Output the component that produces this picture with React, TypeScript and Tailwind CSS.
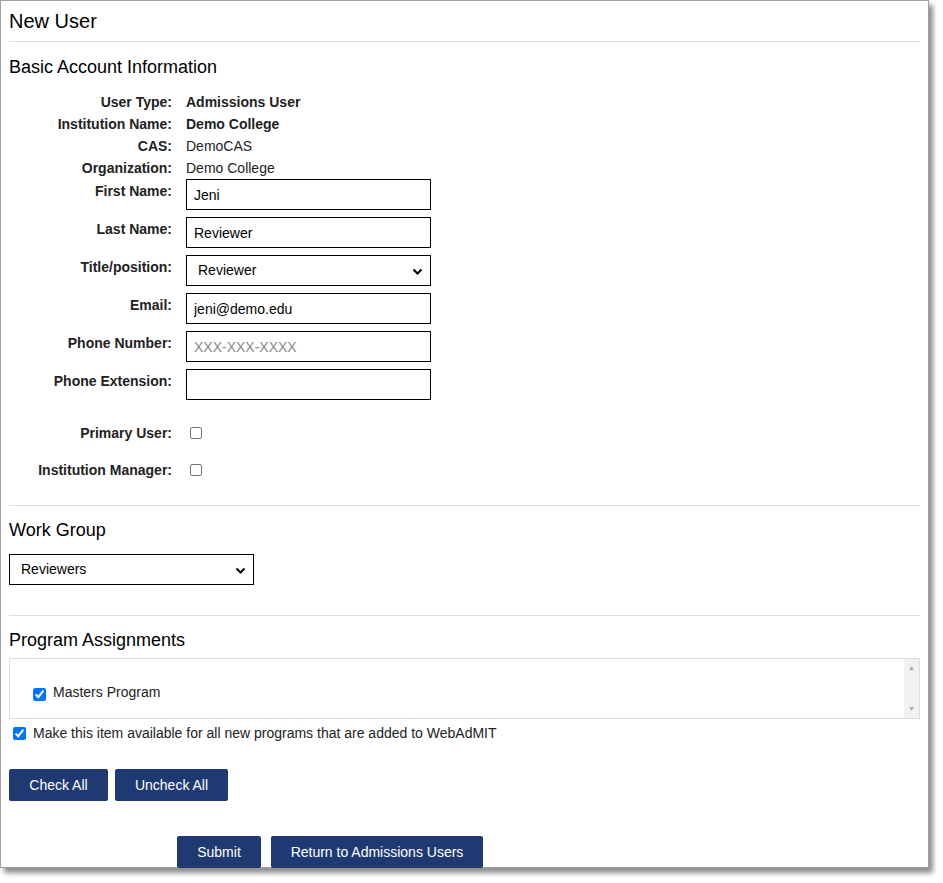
import React from "react";

const Label = ({ children, className = "" }: { children: React.ReactNode; className?: string }) => (
  <div className={`w-[163px] text-right font-bold pr-0 ${className}`}>{children}</div>
);

const Input = ({ value, placeholder }: { value?: string; placeholder?: string }) => (
  <input
    defaultValue={value}
    placeholder={placeholder}
    className="w-[245px] h-[31px] border border-black px-[7px] text-[14px] text-black placeholder:text-[#8a8a8a] outline-none"
  />
);

const Chevron = () => (
  <svg width="11" height="8" viewBox="0 0 11 8" className="absolute right-[7px] top-[12px]">
    <path d="M1.5 1.5 L5.5 5.5 L9.5 1.5" fill="none" stroke="#000" strokeWidth="2" />
  </svg>
);

const Btn = ({ children, w }: { children: React.ReactNode; w: string }) => (
  <button className={`${w} h-[32px] bg-[#1f3a73] text-white text-[14px] rounded-[2px]`}>{children}</button>
);

export default function App() {
  return (
    <div className="bg-white w-[943px] h-[883px]" style={{ fontFamily: '"Liberation Sans", Arial, sans-serif' }}>
      <div className="w-[929px] h-[868px] border border-[#a0a0a0] shadow-[4px_5px_5px_rgba(0,0,0,0.45)] px-[8px] text-[14px] text-[#222]">
        <div className="text-[20px] text-black pt-[8px] leading-[24px]">New User</div>
        <div className="h-px bg-[#ddd] mt-[8px]" />
        <div className="text-[18px] text-black mt-[15px] leading-[20px]">Basic Account Information</div>
        <div className="mt-[14px] flex flex-col">
          {[
            ["User Type:", "Admissions User", true],
            ["Institution Name:", "Demo College", true],
            ["CAS:", "DemoCAS", false],
            ["Organization:", "Demo College", false],
          ].map(([l, v, b], i) => (
            <div key={i} className="flex gap-[14px] h-[22px] items-center">
              <Label>{l as string}</Label>
              <div className={b ? "font-bold" : ""}>{v as string}</div>
            </div>
          ))}
          {[
            ["First Name:", "Jeni"],
            ["Last Name:", "Reviewer"],
            ["Title/position:", "select"],
            ["Email:", "jeni@demo.edu"],
            ["Phone Number:", ""],
            ["Phone Extension:", " "],
          ].map(([l, v], i) => (
            <div key={i} className="flex gap-[14px] mb-[7px]">
              <Label className="pt-[2px]">{l}</Label>
              {v === "select" ? (
                <div className="relative w-[245px] h-[31px] border border-black px-[11px] flex items-center text-black">
                  Reviewer
                  <Chevron />
                </div>
              ) : v === "" ? (
                <Input placeholder="XXX-XXX-XXXX" />
              ) : (
                <Input value={v.trim()} />
              )}
            </div>
          ))}
          {["Primary User:", "Institution Manager:"].map((l, i) => (
            <div key={l} className={`flex gap-[14px] items-center h-[20px] ${i === 0 ? "mt-[16px]" : "mt-[17px]"}`}>
              <Label>{l}</Label>
              <span className="ml-[4px] w-[12px] h-[12px] border border-[#767676] rounded-[2px]" />
            </div>
          ))}
        </div>
        <div className="h-px bg-[#ddd] mt-[25px]" />
        <div className="text-[18px] text-black mt-[14px] leading-[20px]">Work Group</div>
        <div className="relative mt-[14px] w-[245px] h-[31px] border border-black px-[11px] flex items-center text-black">
          Reviewers
          <Chevron />
        </div>
        <div className="h-px bg-[#ddd] mt-[30px]" />
        <div className="text-[18px] text-black mt-[14px] leading-[20px]">Program Assignments</div>
        <div className="mt-[8px] h-[61px] border border-[#ddd] flex">
          <div className="flex-1 flex items-end pb-[15px] pl-[23px] gap-[7px]">
            <input type="checkbox" defaultChecked className="w-[13px] h-[13px] accent-[#0075ff] mb-[2px]" />
            <span>Masters Program</span>
          </div>
          <div className="w-[15px] bg-[#f1f1f1] flex flex-col justify-between items-center py-[4px] text-[#a3a3a3] text-[7px]">
            <span>▲</span>
            <span>▼</span>
          </div>
        </div>
        <div className="flex items-center gap-[7px] mt-[4px] ml-[4px]">
          <input type="checkbox" defaultChecked className="w-[13px] h-[13px] accent-[#0075ff]" />
          <span>Make this item available for all new programs that are added to WebAdMIT</span>
        </div>
        <div className="flex gap-[7px] mt-[25px]">
          <Btn w="w-[99px]">Check All</Btn>
          <Btn w="w-[113px]">Uncheck All</Btn>
        </div>
        <div className="flex gap-[10px] mt-[35px] ml-[168px]">
          <Btn w="w-[84px]">Submit</Btn>
          <Btn w="w-[212px]">Return to Admissions Users</Btn>
        </div>
      </div>
    </div>
  );
}
